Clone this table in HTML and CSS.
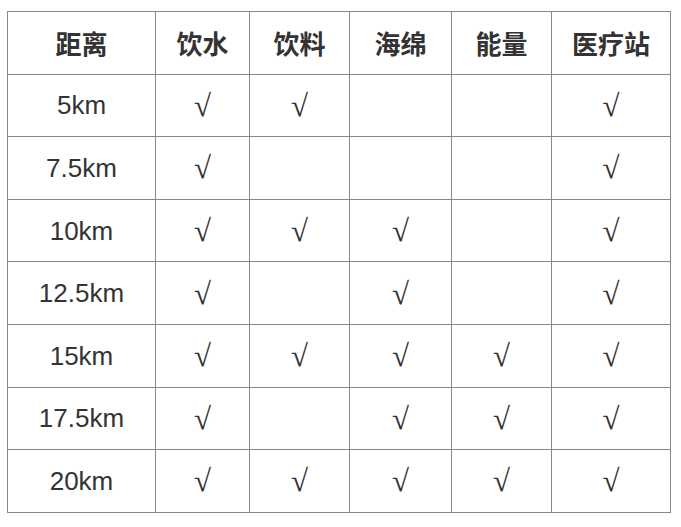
FILE: index.html
```html
<!DOCTYPE html>
<html>
<head>
<meta charset="utf-8">
<link rel="stylesheet" href="styles.css">
</head>
<body>
<table class="supply">
<colgroup>
<col class="c1"><col class="c2"><col class="c3"><col class="c4"><col class="c5"><col class="c6">
</colgroup>
<thead>
<tr><th>距离</th><th>饮水</th><th>饮料</th><th>海绵</th><th>能量</th><th>医疗站</th></tr>
</thead>
<tbody>
<tr><td class="dist">5km</td><td class="ck">√</td><td class="ck">√</td><td class="ck"></td><td class="ck"></td><td class="ck">√</td></tr>
<tr><td class="dist">7.5km</td><td class="ck">√</td><td class="ck"></td><td class="ck"></td><td class="ck"></td><td class="ck">√</td></tr>
<tr><td class="dist">10km</td><td class="ck">√</td><td class="ck">√</td><td class="ck">√</td><td class="ck"></td><td class="ck">√</td></tr>
<tr><td class="dist">12.5km</td><td class="ck">√</td><td class="ck"></td><td class="ck">√</td><td class="ck"></td><td class="ck">√</td></tr>
<tr><td class="dist">15km</td><td class="ck">√</td><td class="ck">√</td><td class="ck">√</td><td class="ck">√</td><td class="ck">√</td></tr>
<tr><td class="dist">17.5km</td><td class="ck">√</td><td class="ck"></td><td class="ck">√</td><td class="ck">√</td><td class="ck">√</td></tr>
<tr><td class="dist">20km</td><td class="ck">√</td><td class="ck">√</td><td class="ck">√</td><td class="ck">√</td><td class="ck">√</td></tr>
</tbody>
</table>
</body>
</html>
```
FILE: styles.css
```css
html, body {
  margin: 0;
  padding: 0;
  background: #ffffff;
}
body {
  padding: 11px 0 0 7px;
  font-family: "Liberation Sans", Arial, "Noto Sans CJK SC", sans-serif;
  color: #333333;
}
.supply {
  border-collapse: collapse;
  table-layout: fixed;
  width: 663px;
}
.c1 { width: 148px; }
.c2 { width: 94px; }
.c3 { width: 100px; }
.c4 { width: 102px; }
.c5 { width: 100px; }
.c6 { width: 119px; }
.supply th,
.supply td {
  border: 1px solid #888888;
  text-align: center;
  vertical-align: middle;
  padding: 0;
  height: 61.6px;
  line-height: 1;
}
.supply th {
  font-family: "Noto Sans CJK SC", sans-serif;
  font-weight: bold;
  font-size: 26px;
  color: #333333;
}
.dist {
  font-size: 26px;
}
.ck {
  font-family: "Liberation Serif", "Times New Roman", serif;
  font-size: 31px;
  color: #333333;
}
```
